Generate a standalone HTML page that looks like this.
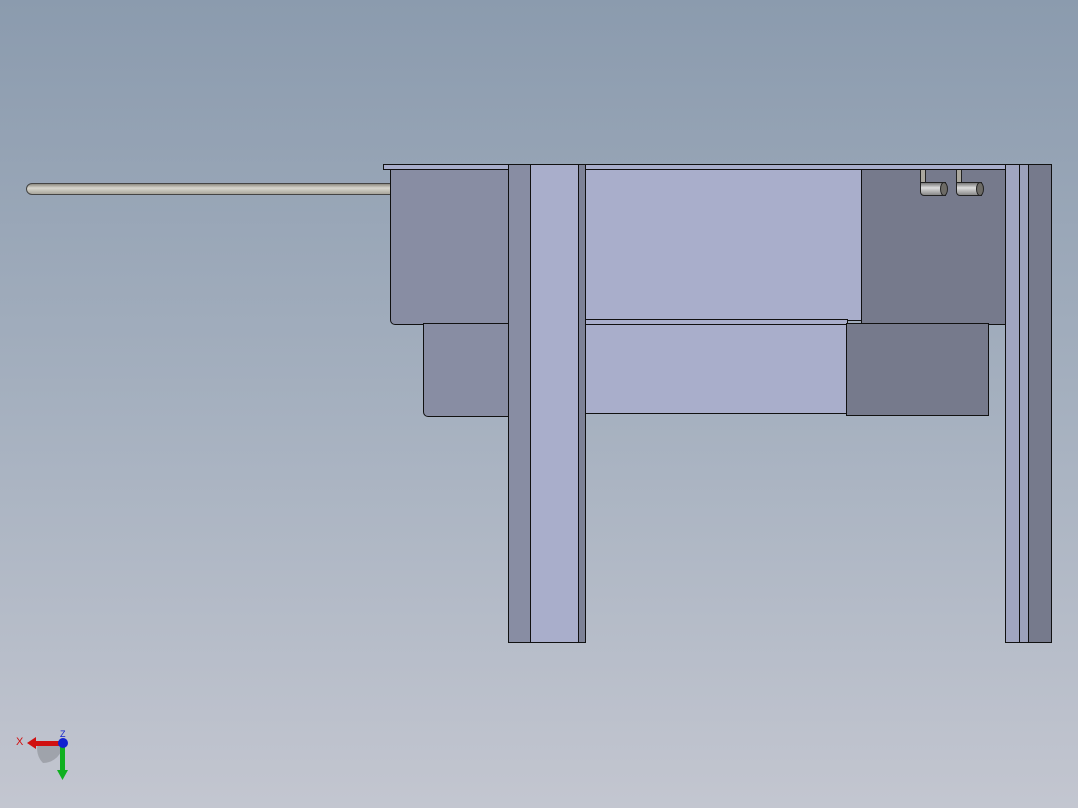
<!DOCTYPE html>
<html><head><style>
body{margin:0;width:1078px;height:808px;overflow:hidden;background:linear-gradient(#8b9bae,#a5b0bf 50%,#c3c6d0);position:relative;font-family:"Liberation Sans",sans-serif}
div{position:absolute;box-sizing:border-box}
.b{border:1.5px solid #111}
.m{background:#a9aecb}.d{background:#888da3}.r{background:#767a8c}
</style></head><body>
<div style="left:26px;top:183px;width:366px;height:12px;border-radius:6px 0 0 6px;background:linear-gradient(#8d8a80,#d8d6ce 40%,#a8a59b);border:1px solid #444"></div>
<div class="b" style="left:383px;top:164px;width:630px;height:6px;background:#a9aecb"></div>
<div class="b d" style="left:390px;top:169px;width:120px;height:156px;border-radius:0 0 0 5px"></div>
<div class="b d" style="left:423px;top:323px;width:88px;height:94px;border-radius:0 0 0 5px"></div>
<div class="b m" style="left:583px;top:169px;width:280px;height:152px"></div>
<div class="b m" style="left:583px;top:319px;width:265px;height:6px"></div>
<div class="b m" style="left:583px;top:324px;width:265px;height:90px"></div>
<div class="b r" style="left:861px;top:169px;width:148px;height:156px"></div>
<div class="b r" style="left:846px;top:323px;width:143px;height:93px"></div>
<div class="b d" style="left:508px;top:164px;width:24px;height:479px"></div>
<div class="b m" style="left:530px;top:164px;width:50px;height:479px"></div>
<div class="b" style="left:578px;top:164px;width:8px;height:479px;background:#7d8296"></div>
<div class="b" style="left:1005px;top:164px;width:16px;height:479px;background:#a0a5c0"></div>
<div class="b r" style="left:1019px;top:164px;width:33px;height:479px"></div>
<div class="b" style="left:1019px;top:164px;width:10px;height:479px;background:#9ca1bb"></div>
<div style="left:920px;top:170px;width:6px;height:18px;border:1px solid #222;border-top:none;background:#aaa79e"></div>
<div style="left:920px;top:182px;width:26px;height:14px;border:1px solid #222;border-radius:0 0 0 4px;background:linear-gradient(#777,#ddd 40%,#888)"></div>
<div style="left:940px;top:182px;width:8px;height:14px;border:1px solid #222;border-radius:50%;background:#6d6b66"></div>
<div style="left:956px;top:170px;width:6px;height:18px;border:1px solid #222;border-top:none;background:#aaa79e"></div>
<div style="left:956px;top:182px;width:26px;height:14px;border:1px solid #222;border-radius:0 0 0 4px;background:linear-gradient(#777,#ddd 40%,#888)"></div>
<div style="left:976px;top:182px;width:8px;height:14px;border:1px solid #222;border-radius:50%;background:#6d6b66"></div>
<svg style="position:absolute;left:10px;top:720px" width="70" height="70">
<path d="M53 23 A20 20 0 0 1 33 43 A20 20 0 0 1 28 23 Z" fill="#8a8d94" opacity=".6"/>
<rect x="25" y="21" width="28" height="5" fill="#d01010"/><path d="M17 23 L26 17 L26 29Z" fill="#d01010"/>
<rect x="50" y="24" width="5" height="28" fill="#10b020"/><path d="M47 50 L58 50 L52.5 60Z" fill="#10b020"/>
<circle cx="53" cy="23" r="5" fill="#1020d0"/>
<text x="6" y="25" font-size="11" fill="#d01010">X</text>
<text x="50" y="17" font-size="9" fill="#1020d0">Z</text>
</svg>
</body></html>
